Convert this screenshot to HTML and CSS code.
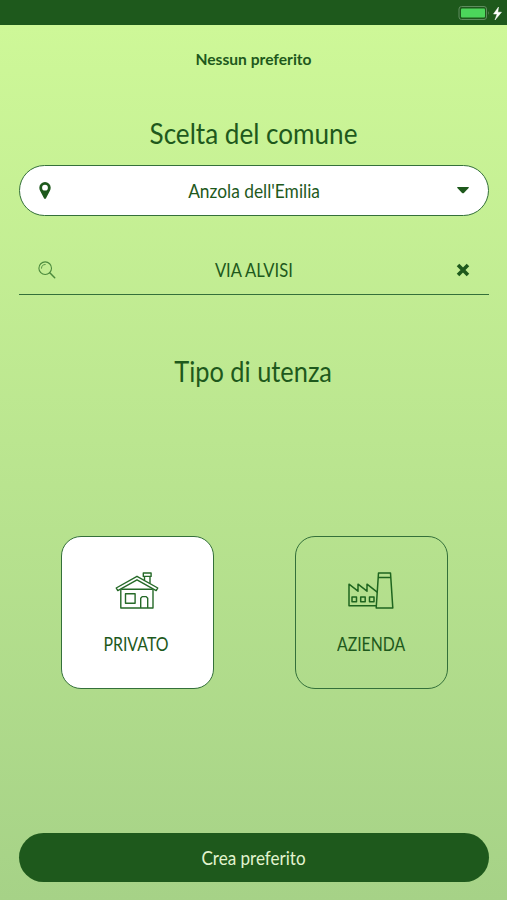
FILE: index.html
```html
<!DOCTYPE html>
<html lang="it">
<head>
<meta charset="utf-8">
<title>Preferiti</title>
<link rel="stylesheet" href="styles.css">
</head>
<body>
<div class="screen">
  <header class="status">
    <svg width="50" height="25" viewBox="0 0 50 25">
      <rect x="2" y="6.5" width="27.5" height="13" rx="2.5" fill="none" stroke="#5f8c5e"/>
      <rect x="4" y="8.5" width="24" height="9" rx="1" fill="#4cd65b"/>
      <path d="M31.3 11q1.7 2 0 4z" fill="#5f8c5e"/>
      <path d="M41.500 7 36.500 14h3.600L38 20l6.500-7.800h-3.700z" fill="#fff" stroke="#fff" stroke-width=".5"/>
    </svg>
  </header>
  <main class="content">
    <p class="notice"><span class="t t-notice">Nessun preferito</span></p>
    <h1 class="heading"><span class="t t-comune">Scelta del comune</span></h1>
    <div class="select">
      <svg class="pin" width="12" height="17" viewBox="0 0 12 17"><path fill="#1e591c" fill-rule="evenodd" d="M6 0a5.700 5.700 0 0 1 5.700 5.700c0 1.300-.4 2.200-.9 3.200L7 16.300Q6 17.700 5 16.300L1.200 8.900C.7 7.900.3 7 .3 5.700A5.700 5.700 0 0 1 6 0zm0 2.800a2.900 2.900 0 1 0 0 5.800 2.900 2.900 0 0 0 0-5.800z"/></svg>
      <span class="t t-anzola">Anzola dell'Emilia</span>
      <svg class="caret" width="12" height="7" viewBox="0 0 12 7"><path fill="#1e591c" d="M.8 0h10.400q1.200.2.400 1.100L6.900 5.900q-.9.800-1.800 0L.4 1.100Q-.4.200.8 0z"/></svg>
    </div>
    <div class="search">
      <svg class="lens" width="18" height="18" viewBox="0 0 18 18" fill="none" stroke="#4c8a3d" stroke-linecap="round"><circle cx="7.200" cy="7.200" r="6.300" stroke-width="1.100"/><path d="M3.500 7.200a3.700 3.700 0 0 1 3.700-3.700" stroke-width=".9"/><path d="m11.800 11.800 4.900 4.900" stroke-width="1.500"/></svg>
      <span class="t t-via">VIA ALVISI</span>
      <svg class="clear" width="14" height="14" viewBox="0 0 14 14"><path d="m2.700 2.700 8.600 8.600m0-8.600-8.600 8.600" stroke="#1e591c" stroke-width="4.200" stroke-linecap="square" stroke-dasharray="none" transform="translate(7 7) scale(.86) translate(-7 -7)"/></svg>
    </div>
    <h2 class="heading second"><span class="t t-tipo">Tipo di utenza</span></h2>
    <div class="cards">
      <div class="card selected">
        <svg width="46" height="40" viewBox="0 0 46 40" fill="none" stroke="#266a28" stroke-width="1.400" stroke-linejoin="round">
          <path d="M2.200 16 23 4.300 43.800 16 42.200 18.600 23 7.800 3.800 18.600z"/>
          <path d="M6.800 17.300V36H39V17.300M7.500 17.300h31"/>
          <path d="M29.300 1h7.800v3.400h-7.800zM30.500 4.400v3.800M36 4.400v7"/>
          <path d="M11.500 21.700h9.600v9.600h-9.600zM26.700 36V26.300l1.500-1.700h4l1.500 1.700V36"/>
        </svg>
        <span class="t t-privato">PRIVATO</span>
      </div>
      <div class="card">
        <svg width="46" height="40" viewBox="0 0 46 40" fill="none" stroke="#1e651f" stroke-width="1.500" stroke-linejoin="round">
          <path d="M28.400 33.700H1V12.200l9 7v-7l9 7v-7l10.500 8.200"/>
          <path d="M30.500 1h12l2.300 35H28.200zM30.300 5.500h12.400"/>
          <path d="M4 25h4.500v4.700H4zM12.700 25h4.500v4.700h-4.500zM21.500 25H26v4.700h-4.500z"/>
        </svg>
        <span class="t t-azienda">AZIENDA</span>
      </div>
    </div>
    <button class="create" type="button"><span class="t t-crea">Crea preferito</span></button>
  </main>
</div>
</body>
</html>
```
FILE: styles.css
```css
* { box-sizing: border-box; }
body { margin: 0; color: #1e591c; font-family: Lato, "Open Sans", sans-serif; }
.screen { height: 900px; display: flex; flex-direction: column; background: linear-gradient(#cef898 25px, #a6d287); }
.status { height: 25px; flex: none; display: flex; justify-content: flex-end; background: #1e591c; }
.content { flex: 1; padding: 0 18.500px; display: flex; flex-direction: column; }
.t { display: inline-block; white-space: nowrap; }
.notice { margin: 24px 0 0; height: 20px; line-height: 20px; text-align: center; font-size: 16px; font-weight: 700; }
.heading { margin: 46px 0 0; height: 36px; line-height: 36px; text-align: center; font-size: 29px; font-weight: 400; }
.select { margin-top: 14px; height: 51px; flex: none; display: flex; align-items: center; justify-content: space-between; padding: 0 19px; font-size: 19.500px; background: #fff; border: 1.300px solid #34703a; border-radius: 26px; }
.search { margin-top: 29px; height: 50px; flex: none; display: flex; align-items: center; justify-content: space-between; padding: 0 19px; font-size: 19.500px; border-bottom: 1.500px solid #34703a; }
.second { margin-top: 59px; }
.cards { margin-top: 146px; display: flex; justify-content: space-between; padding: 0 41px 0 42px; }
.card { width: 153px; height: 153px; display: flex; flex-direction: column; align-items: center; padding-top: 35px; gap: 20px; font-size: 19.500px; line-height: 24px; border: 1.300px solid #34703a; border-radius: 20px; }
.selected { background: #fff; }
.create { margin-top: 144px; height: 49px; flex: none; border: 0; border-radius: 25px; background: #1e591c; color: #e2f4cf; font: 19.500px Lato, "Open Sans", sans-serif; }
.t-notice { transform: scaleX(.975); }
.t-comune { transform: scaleX(.9); }
.t-anzola { transform: translateX(1px) scaleX(.89); }
.t-via { transform: translateX(-2px) scaleX(.85); }
.t-tipo { transform: translateY(-1px) scaleX(.875); }
.t-privato { transform: translateX(-1px) scaleX(.815); }
.t-azienda { transform: scaleX(.81); }
.t-crea { transform: scaleX(.875); }
```
